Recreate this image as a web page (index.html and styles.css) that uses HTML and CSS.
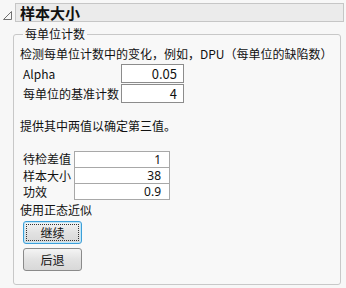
FILE: index.html
```html
<!DOCTYPE html>
<html lang="zh">
<head>
  <meta charset="UTF-8" />
  <title>样本大小</title>
  <link rel="stylesheet" href="styles.css">
</head>
<body>

<div class="header">
  <svg class="toggle" width="9" height="9" viewBox="0 0 9 9">
    <path d="M8.5 0.5 L8.5 8.5 L0.5 8.5 Z" fill="none" stroke="#707070" stroke-width="1"/>
  </svg>
  <div class="title">样本大小</div>
</div>

<fieldset class="group">
  <legend>每单位计数</legend>
  <p class="desc">检测每单位计数中的变化，例如，DPU（每单位的缺陷数）</p>

  <div class="params">
    <label>Alpha</label>
    <div class="field">0.05</div>
    <label>每单位的基准计数</label>
    <div class="field">4</div>
  </div>

  <p class="hint">提供其中两值以确定第三值。</p>

  <div class="solve">
    <label>待检差值</label>
    <div class="cell">1</div>
    <label>样本大小</label>
    <div class="cell">38</div>
    <label>功效</label>
    <div class="cell">0.9</div>
  </div>

  <p class="normal">使用正态近似</p>

  <div class="buttons">
    <button class="btn focus">继续</button>
    <button class="btn">后退</button>
  </div>
</fieldset>

</body>
</html>
```

FILE: styles.css
```css
* {
  box-sizing: border-box;
}
body {
  margin: 0;
  padding: 3px 2px 0 3px;
  background: #f7f7f7;
  color: #111;
  font-family: "Noto Sans CJK SC", "Noto Sans", sans-serif;
  font-size: 12px;
  line-height: 16px;
  width: 346px;
  height: 288px;
  overflow: hidden;
}
.header {
  display: flex;
  align-items: flex-end;
}
.toggle {
  margin: 0 2px 2px 0;
  flex: none;
}
.title {
  flex: 1;
  height: 19px;
  margin-left: 1px;
  background: #ebebeb;
  border: 1px solid #c6c6c6;
  font-weight: bold;
  font-size: 15px;
  line-height: 17px;
  padding-left: 4px;
}
.group {
  margin: 5px 3px 0 10px;
  padding: 0 6px 0 6px;
  height: 258px;
  border: 1px solid #c8c8c8;
  border-radius: 3px;
  background: #f8f8f8;
}
.group legend {
  padding: 0 2px;
  margin-left: 3px;
  line-height: 14px;
}
.desc {
  margin: 5px 0 0;
}
.params {
  display: grid;
  grid-template-columns: 98px 63px;
  row-gap: 1px;
  margin: 2px 0 0 3px;
  align-items: center;
}
.field {
  height: 19px;
  border: 1px solid #8c8c8c;
  background: #fff;
  text-align: right;
  padding-right: 6px;
  line-height: 17px;
  font-size: 13px;
}
.hint {
  margin: 15px 0 0;
}
.solve {
  display: grid;
  grid-template-columns: 51px 96px;
  margin: 17px 0 0 3px;
}
.cell {
  height: 17px;
  border: 1px solid #a8a8a8;
  margin-top: -1px;
  background: #fff;
  text-align: right;
  padding-right: 8px;
  line-height: 15px;
  font-family: "Noto Sans", sans-serif;
  font-size: 12px;
}
.cell:first-of-type {
  margin-top: 0;
}
.solve label {
  line-height: 16px;
}
.normal {
  margin: 2px 0 0;
}
.buttons {
  display: flex;
  flex-direction: column;
  gap: 4px;
  margin: 3px 0 0 3px;
}
.btn {
  width: 59px;
  height: 23px;
  font: inherit;
  line-height: 16px;
  color: #111;
  border: 1px solid #8a8a8a;
  border-radius: 3px;
  background: linear-gradient(#f4f4f4, #e2e2e2 50%, #d8d8d8);
  padding: 0;
}
.btn.focus {
  border-color: #3c9fd8;
  outline: 1px dotted #333;
  outline-offset: -4px;
  box-shadow: inset 0 0 0 1px #bfe6f8;
}
```
